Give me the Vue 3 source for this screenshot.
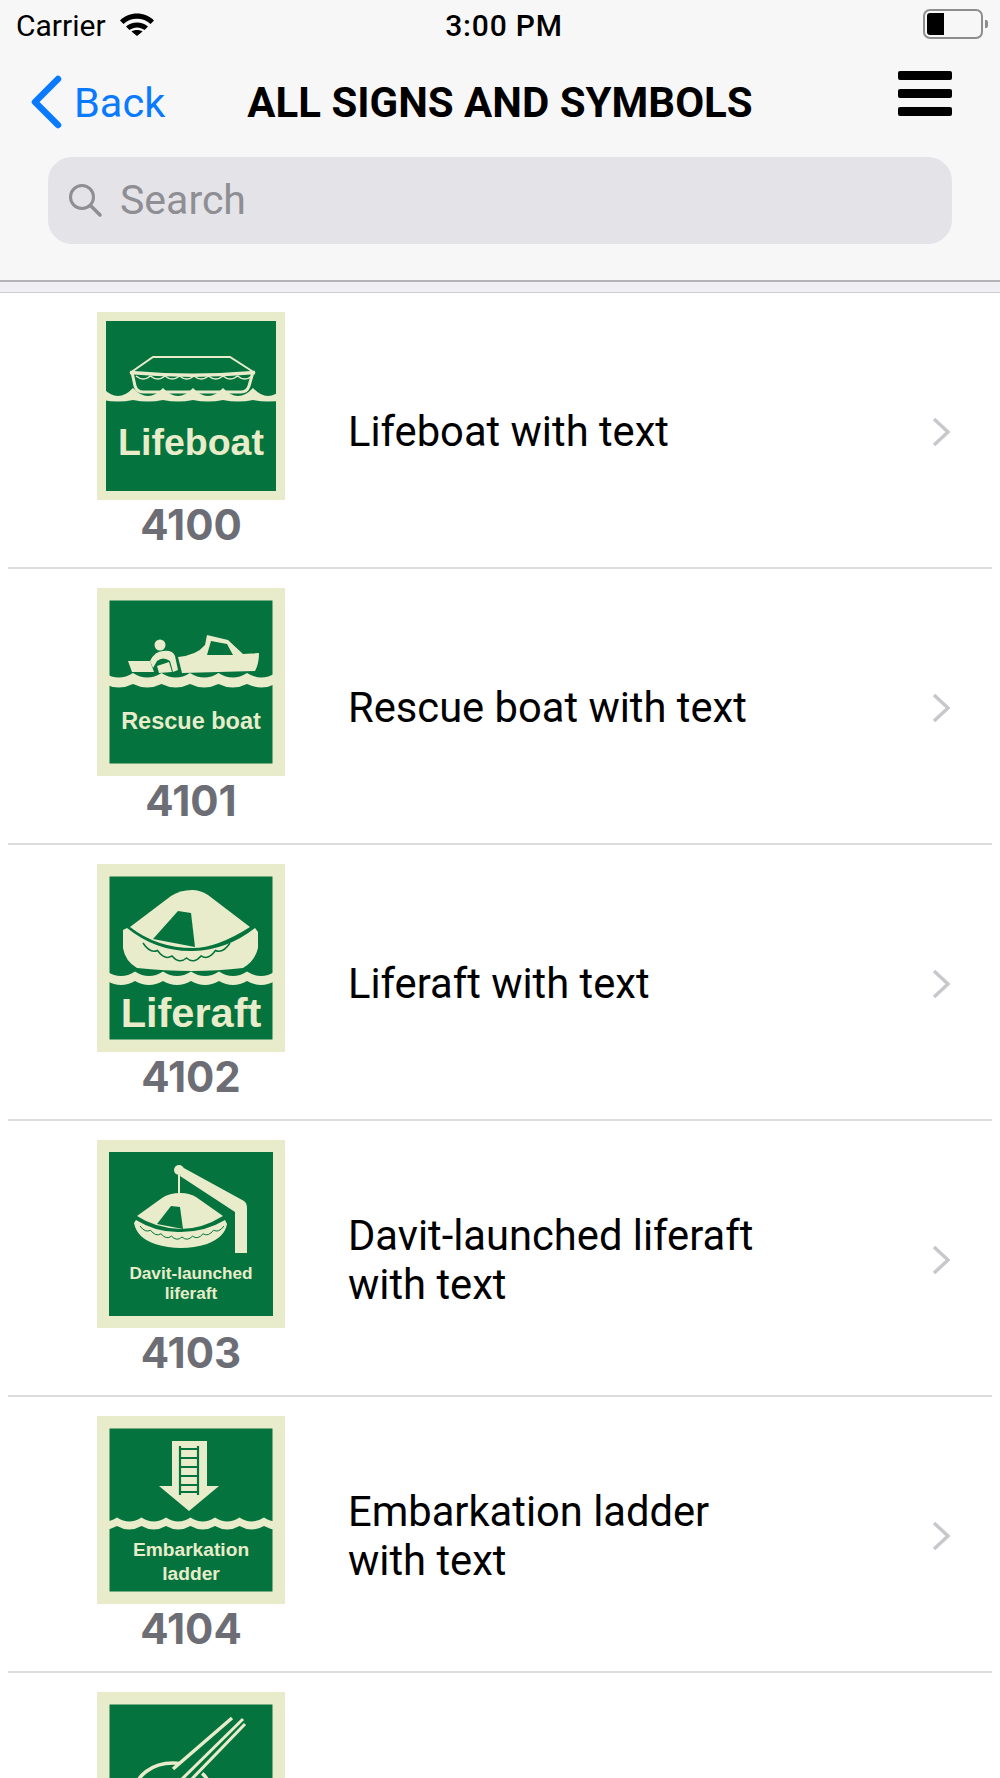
<template>
  <div class="screen">
    <header class="top-bar">
      <div class="status-row">
        <div class="carrier">
          <span>Carrier</span>
          <svg class="wifi" viewBox="0 0 34 23" width="34" height="23">
            <path d="M0 7.500C9-1.800 25-1.800 34 7.500L30.500 11C23.500 4 10.500 4 3.500 11Z" fill="#000" />
            <path d="M6 13.500C12 8 22 8 28 13.500L24.500 17C20 13.500 14 13.500 9.500 17Z" fill="#000" />
            <path d="M11.500 18.500C14.500 16.500 19.500 16.500 22.500 18.500L17 23Z" fill="#000" />
          </svg>
        </div>
        <div class="clock">3:00 PM</div>
        <div class="battery-wrap">
          <div class="battery"><div class="battery-level"></div></div>
          <div class="battery-nub"></div>
        </div>
      </div>

      <nav class="nav-row">
        <div class="back">
          <svg viewBox="0 0 32 54" width="32" height="54">
            <polyline points="28,4 5,27 28,50" fill="none" stroke="#0a7aff" stroke-width="6.500" stroke-linecap="round" stroke-linejoin="round" />
          </svg>
          <span>Back</span>
        </div>
        <h1 class="title">ALL SIGNS AND SYMBOLS</h1>
        <div class="burger">
          <span></span><span></span><span></span>
        </div>
      </nav>

      <div class="search">
        <svg viewBox="0 0 34 34" width="34" height="34">
          <circle cx="14" cy="14" r="11.500" fill="none" stroke="#8e8e93" stroke-width="3" />
          <line x1="22.500" y1="22.500" x2="32" y2="32" stroke="#8e8e93" stroke-width="3.500" stroke-linecap="round" />
        </svg>
        <span>Search</span>
      </div>
    </header>
    <div class="band"></div>

    <ul class="sign-list">
      <li v-for="row in rows" :key="row.art" class="sign-row">
        <div class="row-body">
          <div class="sign-col">
            <svg class="sign" viewBox="0 0 188 188" width="188" height="188">
              <rect width="188" height="188" fill="#e9ecca" />
              <rect :x="row.inset" :y="row.inset" :width="188 - row.inset * 2" :height="188 - row.inset * 2" fill="#04733e" />

              <g v-if="row.art === 'lifeboat'" fill="none" stroke="#e9ecca">
                <path d="M33 61L56 45H133L158 61" stroke-width="2" />
                <path d="M33 60.500Q95 66 158 60.500" stroke-width="3.500" />
                <path d="M35 60L38 74Q40 80 46 80H144Q150 80 152 74L156 60" stroke-width="3" />
                <path :d="scallops(39, 64, 8, 14.500, 3)" stroke-width="1.500" />
              </g>

              <g v-if="row.art === 'rescue'" fill="#e9ecca">
                <path d="M31 73H53L57 84H35Z" />
                <circle cx="63" cy="57" r="5.500" />
                <path d="M53 73Q58 63 66 63Q76 62 78 68L81 82L76 84L73 73Q66 68 60 73L56 80Z" />
                <circle cx="66" cy="76" r="5" fill="#04733e" />
                <path d="M60 78L72 74L75 84L62 85Z" />
                <path d="M81 69Q100 67 108 57L110 47L131 52L146 66L162 65Q162 76 158 83L85 85Z" />
                <path d="M114 53L130 56L136 67H110Z" fill="#04733e" />
              </g>

              <g v-if="row.art === 'liferaft'" fill="#e9ecca">
                <path d="M33 63L74 32Q83 26 95 26Q103 26 111 31L153 63Q120 84 96 84Q60 84 33 63Z" />
                <path d="M81 47L94 49L98 83L56 75Z" fill="#04733e" />
                <path d="M26 66L30 64Q60 88 96 87Q130 86 158 64L161 68V84Q158 97 146 104Q96 110 40 104Q28 97 26 84Z" />
                <path :d="scallops(46, 79, 6, 14.500, 3.500, 15)" fill="none" stroke="#04733e" stroke-width="1.500" />
              </g>

              <g v-if="row.art === 'davit'" fill="#e9ecca">
                <circle cx="82" cy="30" r="5" />
                <rect x="81" y="30" width="2" height="24" />
                <path d="M85 27L147 61Q150 63 150 68V113H138V72L83 36Z" />
                <path d="M40 76L65 58Q72 53 84 53Q92 53 99 57L126 76Q105 89 84 89Q58 88 40 76Z" />
                <path d="M74 66L83 67L86 89L60 84Z" fill="#04733e" />
                <path d="M37 83L39 80Q60 93 84 92Q108 92 128 80L130 84Q128 97 110 104Q84 112 58 104Q40 98 37 83Z" />
                <path :d="scallops(43, 86, 8, 10.500, 2.500, 11)" fill="none" stroke="#04733e" stroke-width="1" />
              </g>

              <g v-if="row.art === 'ladder'">
                <path d="M75 25H110V70H122L92 95L62 70H75Z" fill="#e9ecca" />
                <g fill="none" stroke="#04733e" stroke-width="2.200">
                  <path d="M83 30V79M101 30V79" />
                  <path d="M83 33H101M83 42H101M83 51H101M83 60H101M83 69H101M83 76H101" />
                </g>
              </g>

              <g v-if="row.art === 'launch'" fill="none" stroke="#e9ecca">
                <ellipse cx="76" cy="100" rx="38" ry="29" stroke-width="3.500" />
                <path d="M76 77L135 26L148 32L96 92Z" fill="#04733e" stroke="none" />
                <path d="M135 26L76 77" stroke-width="3.500" />
                <path d="M146 27L84 88" stroke-width="3" />
                <path d="M148 32L90 92" stroke-width="3" />
              </g>

              <path v-if="row.wave" :d="row.wave" fill="#e9ecca" />

              <text
                v-for="(line, i) in row.signText"
                :key="i"
                x="94"
                :y="line.y"
                text-anchor="middle"
                class="sign-text"
                :font-size="row.signSize"
              >{{ line.text }}</text>
            </svg>
            <div v-if="row.code" class="code">{{ row.code }}</div>
          </div>
          <template v-if="row.label">
            <div class="label">{{ row.label }}</div>
            <svg class="chevron" viewBox="0 0 18 30" width="18" height="30">
              <polyline points="2,2 16,15 2,28" fill="none" stroke="#c7c7cc" stroke-width="3.500" />
            </svg>
          </template>
        </div>
        <div class="divider"></div>
      </li>
    </ul>
  </div>
</template>

<script setup>
// band of water: pointed crests on top, same scallops underneath
// runs past the green area, the sign's frame has the same colour
const waveBand = (period, phase, top, depth, bottom, bottomDepth) => {
  let x = phase;
  while (x > 0) x -= period;
  let d = `M${x} ${top}`;
  while (x < 188) {
    d += `Q${x + period / 2} ${top + depth * 2} ${x + period} ${top}`;
    x += period;
  }
  d += `V${bottom}`;
  while (x > 0) {
    d += `Q${x - period / 2} ${bottom + bottomDepth * 2} ${x - period} ${bottom}`;
    x -= period;
  }
  return `${d}Z`;
};

// rope line of a raft, `bow` lets it sag in the middle
const scallops = (x0, y, count, width, depth, bow = 0) => {
  const sag = (i) => y + bow * Math.sin((Math.PI * i) / count);
  let d = `M${x0} ${sag(0)}`;
  for (let i = 1; i <= count; i++) {
    d += `Q${x0 + (i - 0.5) * width} ${sag(i - 0.5) + depth * 2} ${x0 + i * width} ${sag(i)}`;
  }
  return d;
};

const rows = [
  {
    art: 'lifeboat',
    code: '4100',
    label: 'Lifeboat with text',
    inset: 9,
    wave: waveBand(30, 36, 76, 8, 88, 1.500),
    signSize: 37.500,
    signText: [{ text: 'Lifeboat', y: 143 }],
  },
  {
    art: 'rescue',
    code: '4101',
    label: 'Rescue boat with text',
    inset: 12.500,
    wave: waveBand(28.500, 36, 85, 4.500, 96, 3.500),
    signSize: 23.500,
    signText: [{ text: 'Rescue boat', y: 141 }],
  },
  {
    art: 'liferaft',
    code: '4102',
    label: 'Liferaft with text',
    inset: 12.500,
    wave: waveBand(28, 38, 107.500, 4.500, 117, 4),
    signSize: 41.500,
    signText: [{ text: 'Liferaft', y: 163 }],
  },
  {
    art: 'davit',
    code: '4103',
    label: 'Davit-launched liferaft with text',
    inset: 12,
    wave: null,
    signSize: 17.200,
    signText: [
      { text: 'Davit-launched', y: 139 },
      { text: 'liferaft', y: 159 },
    ],
  },
  {
    art: 'ladder',
    code: '4104',
    label: 'Embarkation ladder with text',
    inset: 12.500,
    wave: waveBand(24.500, 20, 101.500, 4, 110, 3.500),
    signSize: 19.200,
    signText: [
      { text: 'Embarkation', y: 140 },
      { text: 'ladder', y: 164 },
    ],
  },
  {
    art: 'launch',
    code: '',
    label: '',
    inset: 12.500,
    wave: null,
    signSize: 19,
    signText: [],
  },
];
</script>

<style>
html,
body {
  margin: 0;
  background: #fff;
}
</style>

<style scoped>
.screen {
  width: 1000px;
  height: 1778px;
  overflow: hidden;
  background: #fff;
  font-family: Roboto, "Liberation Sans", sans-serif;
  color: #000;
}

.top-bar {
  height: 280px;
  background: #f7f7f7;
  border-bottom: 2px solid #b4b4b7;
}

.status-row {
  height: 50px;
  display: grid;
  grid-template-columns: 1fr auto 1fr;
  align-items: center;
  padding: 0 12px 0 16px;
  font-size: 30px;
}
.carrier {
  display: flex;
  align-items: center;
  gap: 14px;
}
.wifi {
  margin-top: -2px;
}
.clock {
  font-weight: 500;
  letter-spacing: 0.8px;
  margin-left: 4px;
}
.battery-wrap {
  display: flex;
  align-items: center;
  justify-content: flex-end;
  gap: 2px;
}
.battery {
  width: 52px;
  height: 22px;
  border: 2px solid #8e8e8e;
  border-radius: 7px;
  padding: 2px;
  margin-top: -2px;
}
.battery-level {
  width: 17px;
  height: 100%;
  background: #000;
  border-radius: 3px 0 0 3px;
}
.battery-nub {
  width: 3px;
  height: 8px;
  margin-top: -2px;
  background: #8e8e8e;
  border-radius: 0 2px 2px 0;
}

.nav-row {
  height: 104px;
  display: grid;
  grid-template-columns: 1fr auto 1fr;
  align-items: center;
  padding: 0 48px;
}
.back {
  display: flex;
  align-items: center;
  gap: 12px;
  margin-left: -18px;
  color: #0a7aff;
  font-size: 41.500px;
}
.title {
  margin: 0;
  font-size: 42px;
  font-weight: 700;
}
.burger {
  justify-self: end;
  align-self: start;
  display: flex;
  flex-direction: column;
  gap: 9px;
  width: 54px;
  margin-top: 21px;
}
.burger span {
  height: 9px;
  background: #000;
  border-radius: 2px;
}

.search {
  margin: 3px 48px 0;
  height: 87px;
  box-sizing: border-box;
  padding: 0 20px 2px;
  display: flex;
  align-items: center;
  gap: 18px;
  background: #e3e3e8;
  border-radius: 24px;
  color: #8e8e93;
  font-size: 41px;
}

.band {
  height: 10px;
  background: #efeff4;
  border-bottom: 1px solid #cfcfd3;
}

.sign-list {
  margin: 0;
  padding: 0;
  list-style: none;
}
.row-body {
  height: 274px;
  box-sizing: border-box;
  padding: 19px 50px 0 97px;
  display: flex;
  align-items: flex-start;
}
.sign-col {
  width: 188px;
  flex-shrink: 0;
  text-align: center;
}
.sign {
  display: block;
}
.sign-text {
  font-family: "Liberation Sans", Arial, sans-serif;
  font-weight: 700;
  fill: #e9ecca;
}
.code {
  font-family: Inter, "Liberation Sans", sans-serif;
  font-size: 42px;
  line-height: 50px;
  font-weight: 700;
  color: #6d6e75;
}
.label {
  width: 430px;
  margin: 0 0 16px 63px;
  align-self: center;
  font-size: 41.700px;
  line-height: 49px;
}
.chevron {
  margin: 0 0 16px auto;
  align-self: center;
}
.divider {
  height: 2px;
  margin: 0 8px;
  background: #dcdcdc;
}
</style>
